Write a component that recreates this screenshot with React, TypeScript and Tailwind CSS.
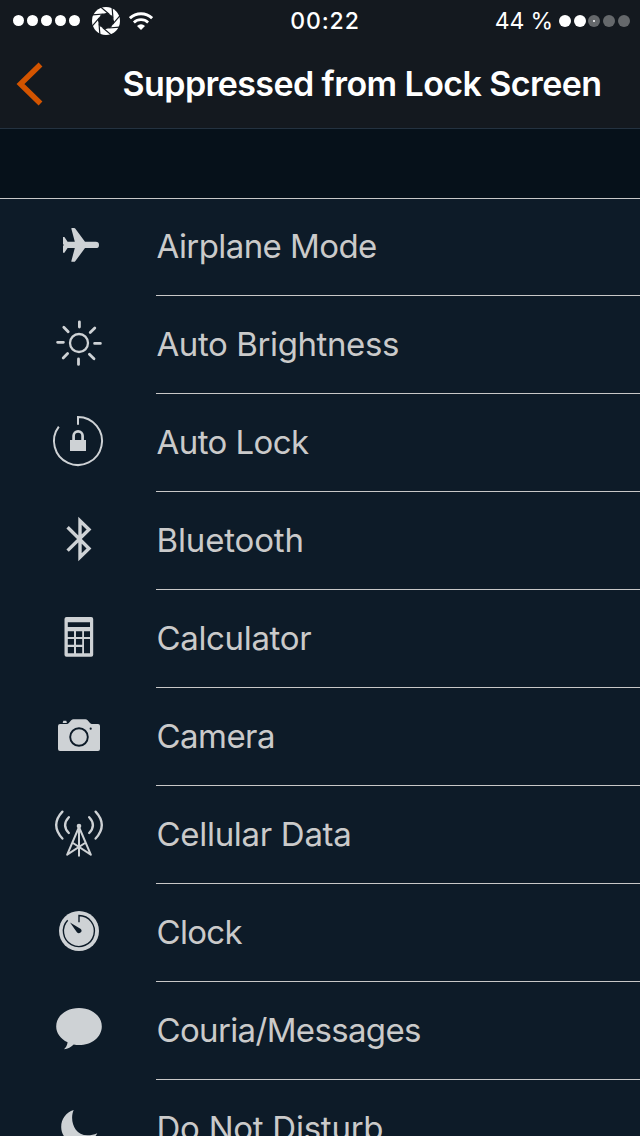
import type { ReactNode } from "react";

const BG = "#0d1b28";
const FG = "#ced2d5";

const stroke = (width: number) => ({
  fill: "none",
  stroke: FG,
  strokeWidth: width,
});

function Airplane() {
  return (
    <path
      fill={FG}
      d="M14 22h1.400l3.200 4.700h7.200L22.300 13.600q0-.6.7-.6h2.200q.6 0 1 .5L36 26.700h10.800a3.200 3.200 0 0 1 0 6.400H36L26.200 46.300q-.4.5-1 .5H23q-.7 0-.7-.6l3.500-13.100h-7.200l-3.200 4.700H14v-6.600l.7-1.200-.7-1.200z"
    />
  );
}

function Sun() {
  return (
    <g {...stroke(3)}>
      <circle cx="30" cy="30" r="9" strokeWidth="2.3" />
      <path
        strokeLinecap="round"
        strokeWidth="2.8"
        d="M30.4 8.8v5.2M29.5 46v5.4M8.6 29.3h5.8M45.6 30.4h5.8M14.8 14.2l4.4 4.5M45.8 14.9l-4.6 4.6M40.4 41.2l4.6 4.5M18.6 40.6l-4.4 4.4"
      />
    </g>
  );
}

function AutoLock() {
  return (
    <g {...stroke(2)}>
      <path d="M29 13.7V6A24 24 0 1 1 9.8 15.6" />
      <path strokeWidth="2.7" d="M24.6 30v-5.2a4.5 4.5 0 0 1 9 0V30" />
      <path fill={FG} stroke="none" d="M21 29h16v11H21z" />
    </g>
  );
}

function Bluetooth() {
  return (
    <path
      {...stroke(3.4)}
      d="M18.600 18.200L40 39.500l-9 8.800V11.700l9 8.800L18.600 41.600"
    />
  );
}

function Calculator() {
  return (
    <path
      fill={FG}
      fillRule="evenodd"
      d="M17.5 10h24.7a2 2 0 0 1 2 2v35.8a2 2 0 0 1-2 2H17.5a2 2 0 0 1-2-2V12a2 2 0 0 1 2-2zM18.8 15.3v4.7H41v-4.7zM18.8 24.2v5.8h6.2v-5.8zM27 24.2v5.8h6.2v-5.8zM35 24.2v5.8h6v-5.8zM18.8 32v5.8h6.2v-5.8zM27 32v5.8h6.2v-5.8zM18.8 40v6.2h6.2v-6.2zM27 40v6.2h6.2v-6.2zM35 32v14.2h6V32z"
    />
  );
}

function Camera() {
  return (
    <g fill={FG}>
      <path d="M11 19h7.2l1.4-.8 2.6-3q1-1 2.2-1h12q1.2 0 2.2 1l2.6 3 1.4.8H49a2 2 0 0 1 2 2v23a2 2 0 0 1-2 2H11a2 2 0 0 1-2-2V21a2 2 0 0 1 2-2z" />
      <path d="M14.3 15.7h3l.6 2.2h-4.2z" />
      <circle cx="30" cy="32" r="8.8" stroke={BG} strokeWidth="1.9" />
      <circle cx="41.7" cy="23.7" r="1.1" fill={BG} />
    </g>
  );
}

function Tower() {
  return (
    <g {...stroke(2.3)} strokeLinecap="round">
      <circle cx="30" cy="23" r="2.3" fill={FG} stroke="none" />
      <path
        strokeWidth="2"
        d="M30 24v28.800M29.600 25L18.200 51.600M30.400 25l11.400 26.600M18.200 51.600L36 40M41.800 51.600L24 40"
      />
      <path d="M19.8 14.2q-7.4 8 0 15.8M40.2 14.2q7.4 8 0 15.8M13.4 8.6q-12.4 13.4 0 27M46.6 8.6q12.4 13.4 0 27" />
    </g>
  );
}

function Clock() {
  return (
    <g>
      <circle cx="30" cy="30" r="20" fill={FG} />
      <path
        fill="none"
        stroke={BG}
        strokeWidth="1.4"
        d="M30 21.2v-6.7A15.5 15.5 0 1 1 18.7 19.3"
      />
      <path fill={BG} d="M21 21.5l10.8 6.4a2.5 2.5 0 1 1-3.9 3.4z" />
    </g>
  );
}

function Bubble() {
  return (
    <path
      fill={FG}
      d="M30 9c12.8 0 22.8 8 22.8 18.4S42.8 46 30 46c-1.8 0-3.6-.2-5.3-.6-2.7 2.6-5.7 4.3-9.7 4.9 2-1.8 3.2-4 3.6-7C11.5 39.8 7.2 34 7.2 27.4 7.2 17 17.2 9 30 9z"
    />
  );
}

function Moon() {
  return (
    <path
      fill={FG}
      d="M24.7 13C20.5 22 24.5 38.3 38.5 38.3c3.6 0 6.5-.5 9.8-2C44.5 43 38.5 47 31 47 20 47 12.2 39.5 12.2 30 12.2 22 17 15.5 24.7 13z"
    />
  );
}

const rows: { label: string; icon: ReactNode; spacing: string }[] = [
  { label: "Airplane Mode", icon: <Airplane />, spacing: "tracking-[-0.57px]" },
  { label: "Auto Brightness", icon: <Sun />, spacing: "tracking-[-0.4px]" },
  { label: "Auto Lock", icon: <AutoLock />, spacing: "tracking-[-0.57px]" },
  { label: "Bluetooth", icon: <Bluetooth />, spacing: "tracking-[-0.15px]" },
  { label: "Calculator", icon: <Calculator />, spacing: "tracking-[-0.35px]" },
  { label: "Camera", icon: <Camera />, spacing: "tracking-[-0.55px]" },
  { label: "Cellular Data", icon: <Tower />, spacing: "tracking-[-0.3px]" },
  { label: "Clock", icon: <Clock />, spacing: "tracking-[-0.7px]" },
  { label: "Couria/Messages", icon: <Bubble />, spacing: "tracking-[-0.65px]" },
  { label: "Do Not Disturb", icon: <Moon />, spacing: "tracking-[-0.25px]" },
];

const blades = [0, 45, 90, 135, 180, 225, 270, 315];

function StatusBar() {
  return (
    <div className="grid h-10 grid-cols-3 items-center text-white">
      <div className="flex h-10 items-center pl-[13px]">
        <div className="flex gap-[3px]">
          {[0, 1, 2, 3, 4].map((i) => (
            <span key={i} className="size-[11px] rounded-full bg-white" />
          ))}
        </div>
        <svg className="ml-3 size-7" viewBox="-14 -14 28 28">
          <circle r="14" fill="#fff" />
          <path
            d="M6.300 -4.600L7.700 1.200L4.600 6.300L-1.200 7.700L-6.300 4.600L-7.700 -1.200L-4.600 -6.300L1.200 -7.700z"
            fill="#14191f"
            stroke="#14191f"
          />
          {blades.map((angle) => (
            <path
              key={angle}
              transform={`rotate(${angle})`}
              d="M7 -2.500L6.100 -13.500"
              stroke="#14191f"
              strokeWidth="1.200"
            />
          ))}
        </svg>
        <svg className="ml-[9px] h-5 w-6" viewBox="0 0 24 20" fill="none" stroke="#fff">
          <path d="M.9 7.200a16 16 0 0 1 22.200 0" strokeWidth="2.900" />
          <path d="M4.900 11.400a10.300 10.300 0 0 1 14.200 0" strokeWidth="2.700" />
          <path d="M12 19l-4-4.100a5.900 5.900 0 0 1 8 0z" fill="#fff" stroke="none" />
        </svg>
      </div>
      <div className="pt-px pl-[10px] text-center text-[23px] leading-10 font-medium tracking-[0.9px]">
        00:22
      </div>
      <div className="flex items-center justify-end pr-[10px]">
        <span className="mr-[6px] pt-px text-[23px] leading-10 tracking-[-0.2px]">44 %</span>
        <div className="flex gap-[2.8px]">
          <span className="size-3 rounded-full bg-white" />
          <span className="size-3 rounded-full bg-white" />
          <span className="flex size-3 items-center justify-center rounded-full bg-[#65686b]">
            <span className="size-[2px] rounded-full bg-white" />
          </span>
          <span className="size-3 rounded-full bg-[#65686b]" />
          <span className="size-3 rounded-full bg-[#65686b]" />
        </div>
      </div>
    </div>
  );
}

export default function App() {
  return (
    <div className="flex h-[1136px] w-[640px] flex-col overflow-hidden bg-[#0d1b28] font-['Inter',sans-serif]">
      <header className="h-[129px] shrink-0 border-b border-[#243240] bg-[#14191f]">
        <StatusBar />
        <div className="flex h-[88px] items-center">
          <svg className="ml-4 h-11 w-7 shrink-0" viewBox="0 0 28 44">
            <path
              d="M24.500 2.500L4.500 22l20 19.500"
              fill="none"
              stroke="#d35400"
              strokeWidth="5.500"
            />
          </svg>
          <h1 className="ml-[78.500px] text-[34px] leading-[88px] font-semibold tracking-[-0.58px] whitespace-nowrap text-white">
            Suppressed from Lock Screen
          </h1>
        </div>
      </header>
      <div className="h-[70px] shrink-0 border-b border-[#c8c8c8] bg-[#06111a]" />
      <ul className="-mt-px">
        {rows.map((row) => (
          <li key={row.label} className="flex h-[98px]">
            <div className="w-[156px] shrink-0 pt-[17px] pl-[49px]">
              <svg className="size-[60px]" viewBox="0 0 60 60">
                {row.icon}
              </svg>
            </div>
            <div
              className={`flex-1 border-b border-[#c8c8c8] pl-[0.5px] text-[33px] leading-[97px] whitespace-nowrap text-[#cacaca] ${row.spacing}`}
            >
              {row.label}
            </div>
          </li>
        ))}
      </ul>
    </div>
  );
}
